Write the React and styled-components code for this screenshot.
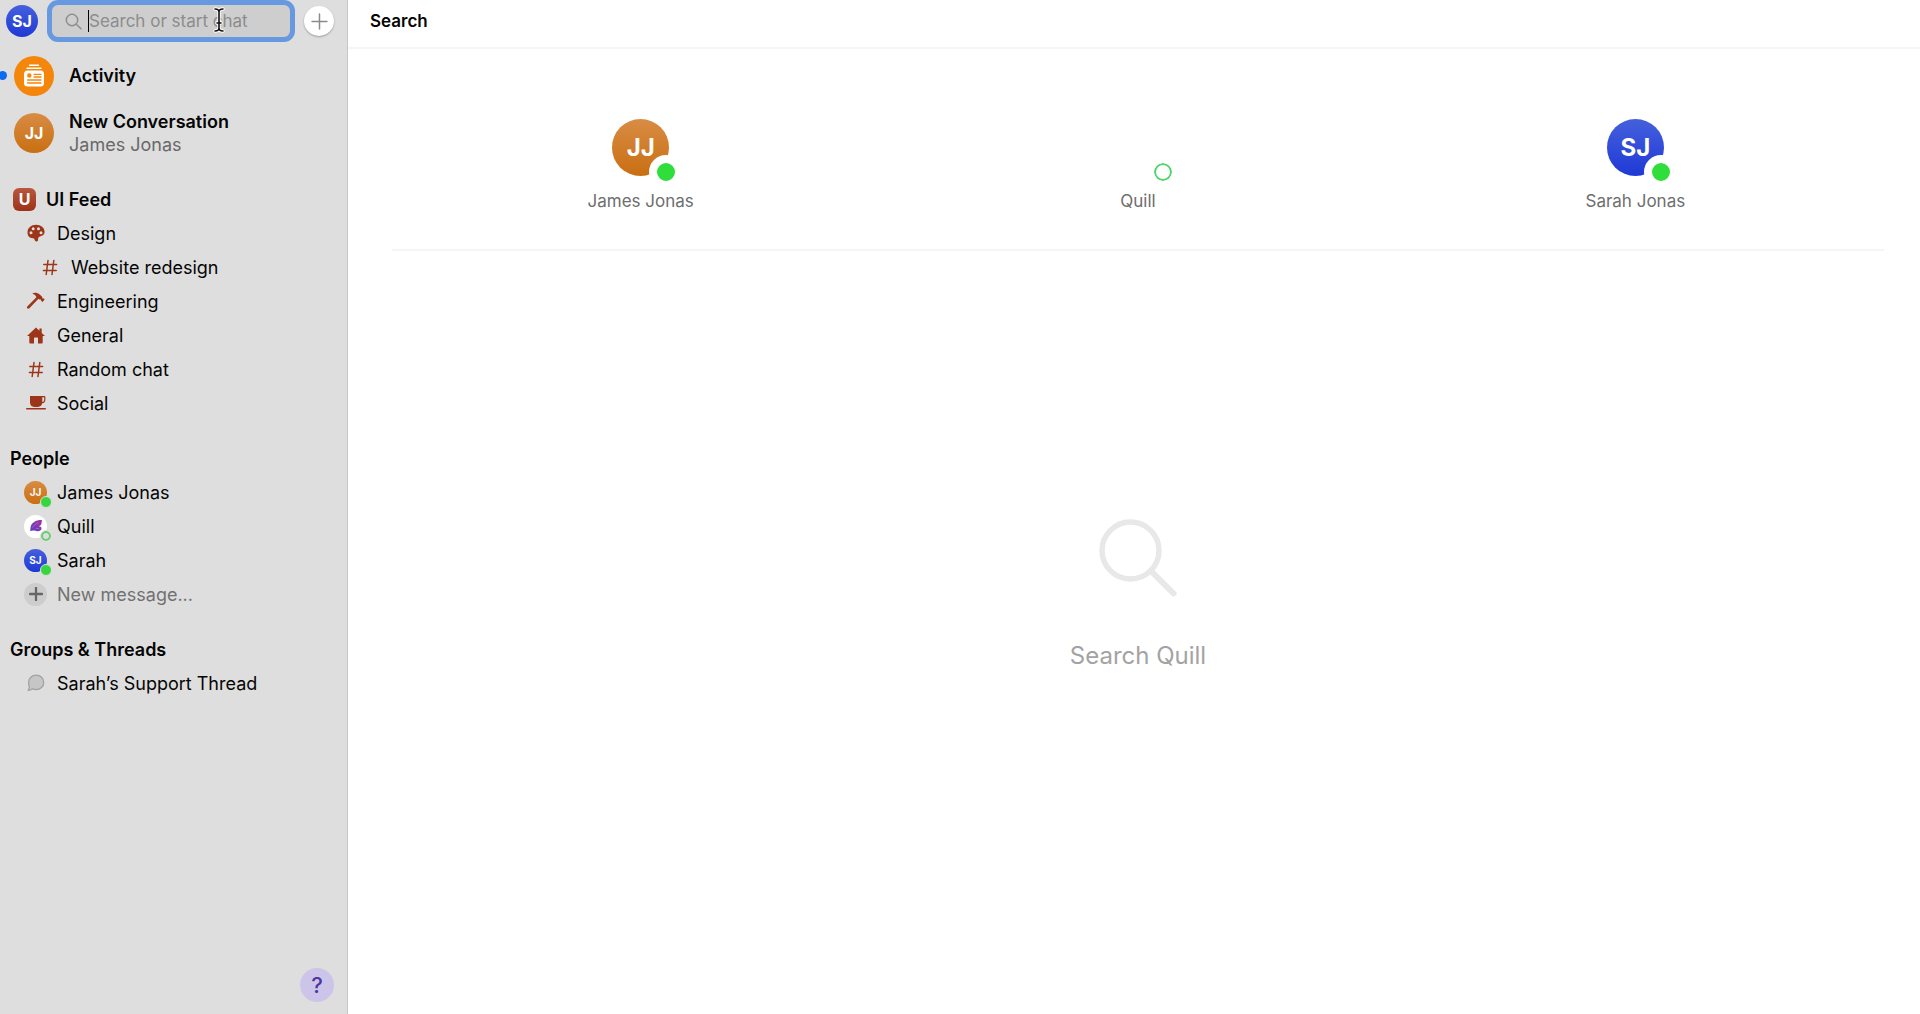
import React, { useState } from 'react';
import styled, { createGlobalStyle } from 'styled-components';

const RUST = '#9d3519';

const HashIcon = () => (
  <svg width="16" height="17" viewBox="0 0 16 17" fill="none" stroke={RUST} strokeWidth="1.5" strokeLinecap="round">
    <path d="M6 1.5L4.200 15.500M11.800 1.500L10 15.500M1.800 5.500H14.600M1.400 11.500H14.200" />
  </svg>
);

const PaletteIcon = () => (
  <svg width="18" height="18" viewBox="0 0 18 18" fill={RUST}>
    <path
      fillRule="evenodd"
      d="M9 .8C4.2.8.5 3.9.5 8.6c0 3.6 2.2 5.600 4.900 5.600 1.500 0 1.900.4 2.100 1.300.2 1 .8 1.900 1.900 1.900 1.100 0 1.700-.7 1.700-1.700 0-1.500.2-2.600 1.800-3.100 2.700-.8 4.700-1.700 4.700-4.500C17.600 3.800 13.900.8 9 .8zM4 7.200a1.500 1.500 0 1 0 0 3 1.500 1.500 0 0 0 0-3zM6.200 3.200a1.500 1.500 0 1 0 0 3 1.500 1.500 0 0 0 0-3zM11.500 3.200a1.500 1.500 0 1 0 0 3 1.500 1.500 0 0 0 0-3zM14 7.200a1.500 1.500 0 1 0 0 3 1.500 1.500 0 0 0 0-3z"
    />
  </svg>
);

const HammerIcon = () => (
  <svg width="19" height="18" viewBox="0 0 19 18" fill={RUST}>
    <path d="M6.200 1.600C8.500.3 11.600.7 13.700 2.600l2.200 2c.5.500.5 1 .3 1.500l.5.500.7-.3 1.300 1.300-2.300 2.500-1.400-1.300.2-.7-.6-.6c-.6.2-1 .1-1.500-.3l-.6-.5L3.400 16.200c-.6.6-1.500.6-2.100.1s-.4-1.500.2-2.100L10.400 5.200C9.800 3.600 8.500 2.400 6.200 1.600z" />
  </svg>
);

const HomeIcon = () => (
  <svg width="18" height="17" viewBox="0 0 18 17" fill={RUST}>
    <path d="M9 .5l3.400 3.200V1.400h2.300v4.500L18 9H15.700v6.600c0 .5-.3.900-.9.900H11V11.200c0-.4-.2-.6-.6-.6H7.600c-.4 0-.6.2-.6.6v5.300H3.200c-.6 0-.9-.4-.9-.9V9H0z" />
  </svg>
);

const CupIcon = () => (
  <svg width="20" height="16" viewBox="0 0 20 16" fill={RUST}>
    <path
      fillRule="evenodd"
      d="M4 1h14.200c.7 0 1.200.5 1.200 1.200v2.600c0 2-1.300 3.300-3.200 3.500-.4 2.200-2 3.600-4.300 3.600H8.400C5.700 11.900 4 10.100 4 7.500zM16.300 2.200v4.700c1.200-.2 1.900-1 1.900-2.200V2.200z"
    />
    <rect x="0" y="13" width="20" height="1.400" rx=".7" />
  </svg>
);

const ChatIcon = () => (
  <svg width="18" height="18" viewBox="0 0 18 18" fill="#c6c6c6" stroke="#a2a2a2" strokeWidth="1.300" strokeLinejoin="round">
    <path d="M9.200 1.200c4.200 0 7.500 3.100 7.500 7.200s-3.300 7.200-7.500 7.200c-1.400 0-2.700-.3-3.800-1C4.400 15.700 2.900 16.400 1.200 16.400c.8-1 1.100-2.200 1.100-3.700C1.800 11.500 1.600 9.900 1.600 8.400 1.600 4.300 5 1.200 9.200 1.200z" />
  </svg>
);

const NewsIcon = () => (
  <svg width="22" height="24" viewBox="0 0 22 24">
    <path d="M6.500 1.200h9M4 4.200h14" stroke="#fff" strokeWidth="1.400" strokeLinecap="round" />
    <rect x="1" y="6.500" width="20" height="16" rx="3.500" fill="#fff" />
    <circle cx="6.300" cy="11.500" r="2.200" fill="#f4860c" />
    <path d="M11 10.300h7M11 13h7M4.500 16h13.500M4.500 19h13.500" stroke="#f4860c" strokeWidth="1.300" strokeLinecap="round" />
  </svg>
);

const FeatherIcon = () => (
  <svg width="14" height="14" viewBox="0 0 14 14">
    <defs>
      <linearGradient id="feather" x1="1" y1="0" x2="0" y2="1">
        <stop offset="0" stopColor="#a8329c" />
        <stop offset="1" stopColor="#5a3fc4" />
      </linearGradient>
    </defs>
    <path
      fill="url(#feather)"
      d="M13 1C7 .8 2.500 3.500 1.600 8c-.2 1.200-.3 2.500-.4 4 1.300-.3 2.500-.6 4-.4l2.300.5c2.500.6 4.800-.3 5-2.600.1-1.400-1.200-2.300-2.900-2.200 1.600-.6 2.700-1.400 2.800-2.600z"
    />
    <path d="M3.500 8.500C5 6 7 4.500 9.500 3.700M7 9.500h3" fill="none" stroke="#b77fd8" strokeWidth=".6" />
  </svg>
);

const PlusIcon = ({ size, width, color }) => (
  <svg width={size} height={size} viewBox="0 0 16 16" fill="none" stroke={color} strokeWidth={width} strokeLinecap="round">
    <path d="M8 1V15M1 8H15" />
  </svg>
);

const SmallSearchIcon = () => (
  <svg width="17" height="17" viewBox="0 0 17 17" fill="none" stroke="#8e8e8e" strokeWidth="1.500" strokeLinecap="round">
    <circle cx="7" cy="7" r="5.700" />
    <path d="M11.300 11.300L16 15.800" />
  </svg>
);

const LargeSearchIcon = () => (
  <svg width="78" height="78" viewBox="0 0 78 78" fill="none" stroke="#e8e8e8">
    <circle cx="31.500" cy="31.500" r="28.500" strokeWidth="5.500" />
    <path d="M52 52L74.500 74.500" strokeWidth="6" strokeLinecap="round" />
  </svg>
);

const PointerIcon = () => (
  <svg width="12" height="26" viewBox="0 0 12 26" fill="none" strokeLinecap="round">
    <path d="M2 2C4.500 2 6 3 6 5V21C6 23 4.500 24 2 24M10 2C7.500 2 6 3 6 5M6 21C6 23 7.500 24 10 24M4 16H8" stroke="#fff" strokeWidth="3.400" />
    <path d="M2 2C4.500 2 6 3 6 5V21C6 23 4.500 24 2 24M10 2C7.500 2 6 3 6 5M6 21C6 23 7.500 24 10 24M4 16H8" stroke="#111" strokeWidth="1.600" />
  </svg>
);

const channels = [
  { name: 'Design', icon: <PaletteIcon /> },
  { name: 'Website redesign', icon: <HashIcon />, nested: true },
  { name: 'Engineering', icon: <HammerIcon /> },
  { name: 'General', icon: <HomeIcon /> },
  { name: 'Random chat', icon: <HashIcon /> },
  { name: 'Social', icon: <CupIcon /> },
];

const people = [
  { name: 'James Jonas', initials: 'JJ', tone: 'orange', online: true },
  { name: 'Quill', icon: <FeatherIcon />, tone: 'white', online: false },
  { name: 'Sarah', initials: 'SJ', tone: 'blue', online: true },
];

const results = [
  { name: 'James Jonas', initials: 'JJ', tone: 'orange', online: true },
  { name: 'Quill', tone: 'none', online: false },
  { name: 'Sarah Jonas', initials: 'SJ', tone: 'blue', online: true },
];

const App = () => {
  const [query, setQuery] = useState('');

  return (
    <>
      <GlobalStyle />
      <Page>
        <Sidebar>
          <TopBar>
            <Avatar as="button" type="button" aria-label="Your account" $size={32} $font={16} $tone="blue">
              SJ
            </Avatar>
            <SearchBox>
              <SmallSearchIcon />
              <Caret />
              <SearchInput
                type="text"
                aria-label="Search or start chat"
                placeholder="Search or start chat"
                value={query}
                onChange={(e) => setQuery(e.target.value)}
              />
              <Pointer>
                <PointerIcon />
              </Pointer>
            </SearchBox>
            <AddButton type="button" aria-label="New chat">
              <PlusIcon size={17} width={1.4} color="#8a8a8a" />
            </AddButton>
          </TopBar>

          <Recent>
            <RecentItem href="#activity">
              <UnreadDot />
              <Avatar $size={40} $font={16} $tone="amber">
                <NewsIcon />
              </Avatar>
              <RecentText>
                <RecentTitle>Activity</RecentTitle>
              </RecentText>
            </RecentItem>
            <RecentItem href="#new-conversation">
              <Avatar $size={40} $font={16} $tone="orange">
                JJ
              </Avatar>
              <RecentText>
                <RecentTitle>New Conversation</RecentTitle>
                <RecentSubtitle>James Jonas</RecentSubtitle>
              </RecentText>
            </RecentItem>
          </Recent>

          <Nav>
            <Section>
              <TeamHeading>
                <TeamLogo>U</TeamLogo>
                UI Feed
              </TeamHeading>
              {channels.map((channel) => (
                <Row key={channel.name} href="#channel" $nested={channel.nested}>
                  <RowIcon>{channel.icon}</RowIcon>
                  {channel.name}
                </Row>
              ))}
            </Section>

            <Section>
              <SectionHeading>People</SectionHeading>
              {people.map((person) => (
                <Row key={person.name} href="#person">
                  <AvatarWrap>
                    <Avatar $size={23} $font={10} $tone={person.tone}>
                      {person.initials || person.icon}
                    </Avatar>
                    <SmallStatus $online={person.online} />
                  </AvatarWrap>
                  {person.name}
                </Row>
              ))}
              <Row href="#new-message" $muted>
                <RowIcon $round>
                  <PlusIcon size={14} width={2.6} color="#666" />
                </RowIcon>
                New message...
              </Row>
            </Section>

            <Section>
              <SectionHeading>Groups &amp; Threads</SectionHeading>
              <Row href="#thread">
                <RowIcon>
                  <ChatIcon />
                </RowIcon>
                Sarah’s Support Thread
              </Row>
            </Section>
          </Nav>

          <HelpButton type="button" aria-label="Help">
            ?
          </HelpButton>
        </Sidebar>

        <Main>
          <Header>
            <Title>Search</Title>
          </Header>
          <Content>
            <Results>
              {results.map((person) => (
                <Result key={person.name} href="#person">
                  <AvatarWrap>
                    <Avatar $size={57} $font={24} $tone={person.tone}>
                      {person.initials}
                    </Avatar>
                    <LargeStatus $online={person.online} />
                  </AvatarWrap>
                  {person.name}
                </Result>
              ))}
            </Results>
            <Empty>
              <LargeSearchIcon />
              <EmptyText>Search Quill</EmptyText>
            </Empty>
          </Content>
        </Main>
      </Page>
    </>
  );
};

const tones = {
  blue: 'linear-gradient(#4560dc, #1f39d6)',
  orange: 'linear-gradient(#d88c44, #c96f12)',
  amber: '#f4860c',
  white: '#fff',
  none: 'transparent',
};

const GlobalStyle = createGlobalStyle`
  * {
    box-sizing: border-box;
  }

  body {
    margin: 0;
    font-family: Inter, "Liberation Sans", sans-serif;
    font-size: 18px;
    color: #050505;
    background: #fff;
  }

  a {
    color: inherit;
    text-decoration: none;
  }

  button,
  input {
    padding: 0;
    border: none;
    font-family: inherit;
  }

  svg {
    display: block;
    flex: none;
  }
`;

const Page = styled.div`
  display: flex;
  min-height: 100vh;
`;

const Sidebar = styled.aside`
  display: flex;
  flex-direction: column;
  flex: none;
  width: 348px;
  overflow: hidden;
  background: #dedede;
  border-right: 1px solid #c6c6c6;
`;

const TopBar = styled.div`
  display: flex;
  align-items: center;
  gap: 9px;
  height: 42px;
  padding: 0 13px 0 6px;
`;

const Avatar = styled.span`
  display: flex;
  align-items: center;
  justify-content: center;
  flex: none;
  width: ${(props) => props.$size}px;
  height: ${(props) => props.$size}px;
  border-radius: 50%;
  background: ${(props) => tones[props.$tone]};
  color: #fff;
  font-size: ${(props) => props.$font}px;
  font-weight: 700;
`;

const AvatarWrap = styled.span`
  position: relative;
  flex: none;
`;

const SearchBox = styled.div`
  position: relative;
  display: flex;
  align-items: center;
  flex: 1;
  min-width: 0;
  height: 42px;
  padding: 0 10px 0 13px;
  border: 5px solid #6699e0;
  border-radius: 11px;
  background: #cecece;
`;

const Caret = styled.span`
  flex: none;
  width: 1px;
  height: 22px;
  margin-left: 6px;
  background: #000;
`;

const SearchInput = styled.input`
  flex: 1;
  min-width: 0;
  height: 24px;
  background: transparent;
  font-size: 17px;
  color: #111;
  outline: none;

  &::placeholder {
    color: #8c8c8c;
    opacity: 1;
  }
`;

/* text cursor hovering over the placeholder */
const Pointer = styled.span`
  position: absolute;
  top: 2px;
  left: 161px;
  pointer-events: none;
`;

const AddButton = styled.button`
  display: flex;
  align-items: center;
  justify-content: center;
  flex: none;
  width: 30px;
  height: 30px;
  border-radius: 50%;
  background: #fff;
  box-shadow: 0 1px 2px rgba(0, 0, 0, 0.3);
`;

const Recent = styled.div`
  display: flex;
  flex-direction: column;
  padding-top: 5px;
`;

const RecentItem = styled.a`
  position: relative;
  display: flex;
  align-items: center;
  gap: 15px;
  height: 57px;
  padding-left: 14px;
`;

const UnreadDot = styled.span`
  position: absolute;
  left: -2px;
  width: 9px;
  height: 9px;
  border-radius: 50%;
  background: #0a6cf0;
`;

const RecentText = styled.span`
  display: flex;
  flex-direction: column;
  line-height: 23px;
`;

const RecentTitle = styled.span`
  font-weight: 600;
`;

const RecentSubtitle = styled.span`
  color: #696969;
`;

const Nav = styled.nav`
  display: flex;
  flex-direction: column;
  gap: 21px;
  padding-top: 21px;
`;

const Section = styled.section`
  display: flex;
  flex-direction: column;
`;

const SectionHeading = styled.h2`
  display: flex;
  align-items: center;
  height: 34px;
  margin: 0;
  padding-left: 10px;
  font-size: 18px;
  font-weight: 600;
`;

const TeamHeading = styled(SectionHeading)`
  gap: 10px;
  padding-left: 13px;
`;

const TeamLogo = styled.span`
  display: flex;
  align-items: center;
  justify-content: center;
  width: 23px;
  height: 23px;
  border-radius: 6px;
  background: linear-gradient(#b9573f, #9c3318);
  color: #fff;
  font-size: 16px;
  font-weight: 700;
`;

const Row = styled.a`
  display: flex;
  align-items: center;
  gap: 10px;
  height: 34px;
  padding-left: ${(props) => (props.$nested ? '38px' : '24px')};
  color: ${(props) => (props.$muted ? '#717171' : 'inherit')};
`;

const RowIcon = styled.span`
  display: flex;
  align-items: center;
  justify-content: center;
  flex: none;
  width: 23px;
  height: 23px;
  border-radius: 50%;
  background: ${(props) => (props.$round ? '#cdcdcd' : 'transparent')};
`;

const SmallStatus = styled.span`
  position: absolute;
  right: -5px;
  bottom: -4px;
  width: 12px;
  height: 12px;
  border: 1px solid #dedede;
  border-radius: 50%;
  background: ${(props) => (props.$online ? '#37d63e' : '#dedede')};
  box-shadow: ${(props) => (props.$online ? 'none' : 'inset 0 0 0 2px #62cf6c')};
`;

const LargeStatus = styled.span`
  position: absolute;
  right: -14px;
  bottom: -13px;
  width: 34px;
  height: 34px;
  border: 8px solid #fff;
  border-radius: 50%;
  background: ${(props) => (props.$online ? '#2fdd3b' : '#fff')};
  box-shadow: ${(props) => (props.$online ? 'none' : 'inset 0 0 0 2px #4fd466')};
`;

const HelpButton = styled.button`
  align-self: flex-end;
  width: 34px;
  height: 34px;
  margin: auto 13px 12px 0;
  border-radius: 50%;
  background: #cdc5e9;
  color: #4f35a0;
  font-size: 22px;
  font-weight: 500;
`;

const Main = styled.main`
  display: flex;
  flex-direction: column;
  flex: 1;
  min-width: 0;
`;

const Header = styled.header`
  display: flex;
  align-items: center;
  height: 49px;
  padding: 0 22px 6px;
  border-bottom: 2px solid #f5f5f5;
`;

const Title = styled.h1`
  margin: 0;
  font-size: 17px;
  font-weight: 600;
`;

const Content = styled.div`
  display: flex;
  flex-direction: column;
  flex: 1;
  padding: 0 36px 0 44px;
`;

const Results = styled.div`
  display: grid;
  grid-template-columns: repeat(3, 1fr);
  padding: 70px 0 36px;
  border-bottom: 2px solid #f5f5f5;
`;

const Result = styled.a`
  display: flex;
  flex-direction: column;
  align-items: center;
  gap: 13px;
  color: #6e6e6e;
  font-size: 17px;
  line-height: 24px;
`;

const Empty = styled.div`
  display: flex;
  flex-direction: column;
  align-items: center;
  justify-content: center;
  gap: 43px;
  flex: 1;
  padding-bottom: 74px;
`;

const EmptyText = styled.p`
  margin: 0;
  color: #a3a3a3;
  font-size: 24px;
  line-height: 32px;
`;

export default App;
